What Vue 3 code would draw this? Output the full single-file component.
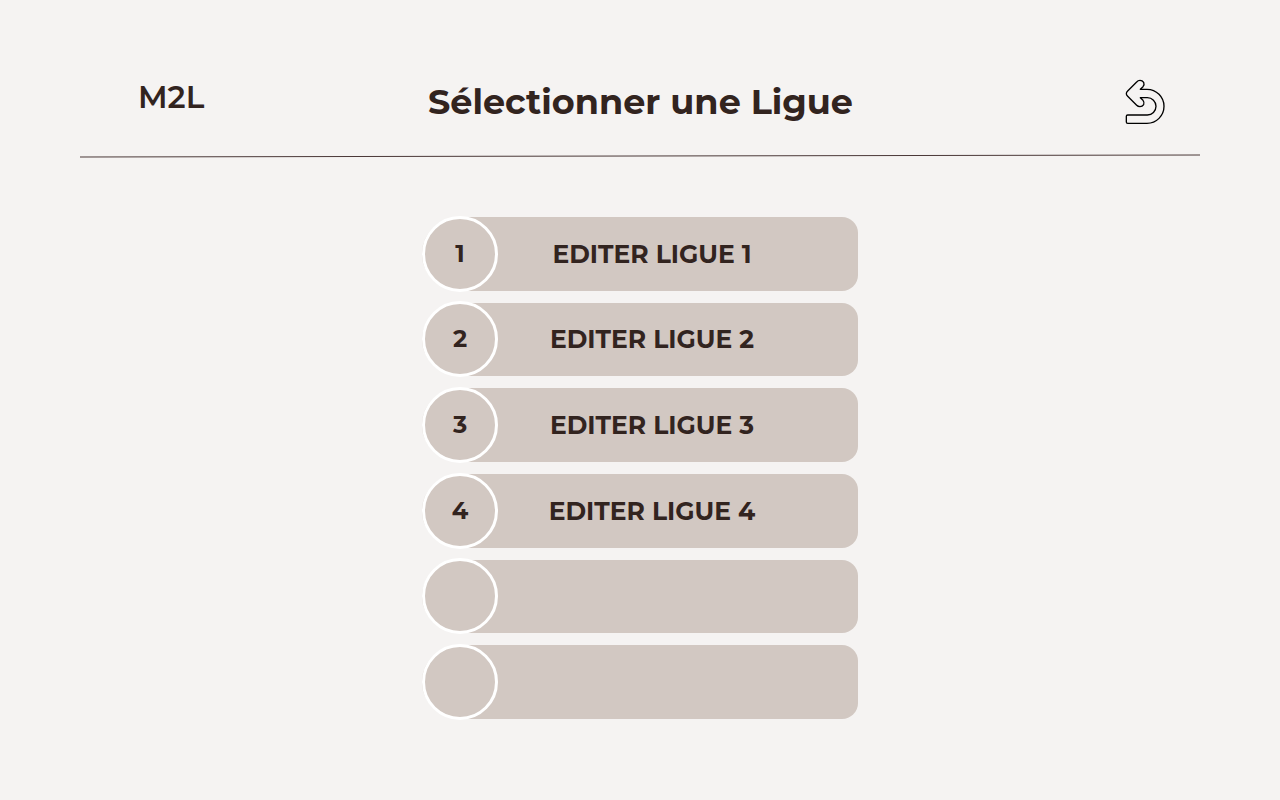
<script setup>
const ligues = [
  { id: 1, name: 'EDITER LIGUE 1' },
  { id: 2, name: 'EDITER LIGUE 2' },
  { id: 3, name: 'EDITER LIGUE 3' },
  { id: 4, name: 'EDITER LIGUE 4' },
  { id: 5, name: '' },
  { id: 6, name: '' },
]
</script>

<template>
  <div class="page">
    <header class="header">
      <span class="brand">M2L</span>
      <h1 class="title">Sélectionner une Ligue</h1>
      <button class="back" type="button" aria-label="Retour">
        <svg viewBox="30 27 120 138" aria-hidden="true">
          <path
            d="M38 135H97A26 26 0 0 0 97 83H76L84 91Q89 97 86 104Q82 110 75 110Q69 110 65 106L38 79Q34 75 34 71Q34 67 38 63L65 36Q69 31 75 31Q82 31 86 37Q89 44 84 50L76 58H96A51 51 0 0 1 96 160H38Q34 160 34 156V139Q34 135 38 135Z"
          />
        </svg>
      </button>
    </header>
    <svg class="rule" viewBox="0 0 1120 4" preserveAspectRatio="none" aria-hidden="true">
      <line x1="0" y1="3" x2="1120" y2="1" />
    </svg>
    <main class="list">
      <button v-for="ligue in ligues" :key="ligue.id" class="row" type="button" :aria-label="ligue.name || 'Emplacement libre'">
        <span class="badge">{{ ligue.name ? ligue.id : '' }}</span>
        <span class="label">{{ ligue.name }}</span>
      </button>
    </main>
  </div>
</template>

<style>
body {
  background: #f5f3f2;
}
</style>

<style scoped>
.page {
  box-sizing: border-box;
  min-height: 100vh;
  padding: 76px 80px 80px;
  background: #f5f3f2;
  color: #32241f;
  font-family: Montserrat, Inter, sans-serif;
}
.header {
  display: grid;
  grid-template-columns: 1fr auto 1fr;
  align-items: start;
  height: 78px;
  padding: 0 35px 0 58px;
}
.brand {
  font-size: 31px;
  font-weight: 600;
  line-height: 42px;
}
.title {
  margin: 0;
  padding-right: 22px;
  font-size: 35px;
  font-weight: 700;
  line-height: 52px;
}
.back {
  justify-self: end;
  margin-top: 3px;
  padding: 0;
  border: 0;
  background: none;
  cursor: pointer;
}
.back svg {
  display: block;
  width: 40px;
  height: 46px;
}
.back path {
  fill: none;
  stroke: #000;
  stroke-width: 4;
  stroke-linejoin: round;
}
.rule {
  display: block;
  width: 100%;
  height: 4px;
}
.rule line {
  stroke: #4a3838;
  stroke-width: 1;
}
.list {
  display: grid;
  grid-auto-rows: 1fr;
  gap: 12px;
  max-width: 436px;
  min-height: 502px;
  margin: 59px auto 0;
}
.row {
  display: flex;
  align-items: center;
  padding: 0;
  border: 0;
  border-radius: 40px 16px 16px 40px / 36px 16px 16px 36px;
  background: #d2c8c2;
  color: inherit;
  font: 700 24px/28px Montserrat, Inter, sans-serif;
  cursor: pointer;
}
.badge {
  box-sizing: border-box;
  display: flex;
  flex: none;
  align-items: center;
  justify-content: center;
  width: 76px;
  height: 76px;
  margin: -2px 0;
  border: 3px solid #fff;
  border-radius: 50%;
  background: #d2c8c2;
}
.label {
  flex: 1;
  padding-right: 52px;
  font-size: 25px;
  text-align: center;
}
</style>
